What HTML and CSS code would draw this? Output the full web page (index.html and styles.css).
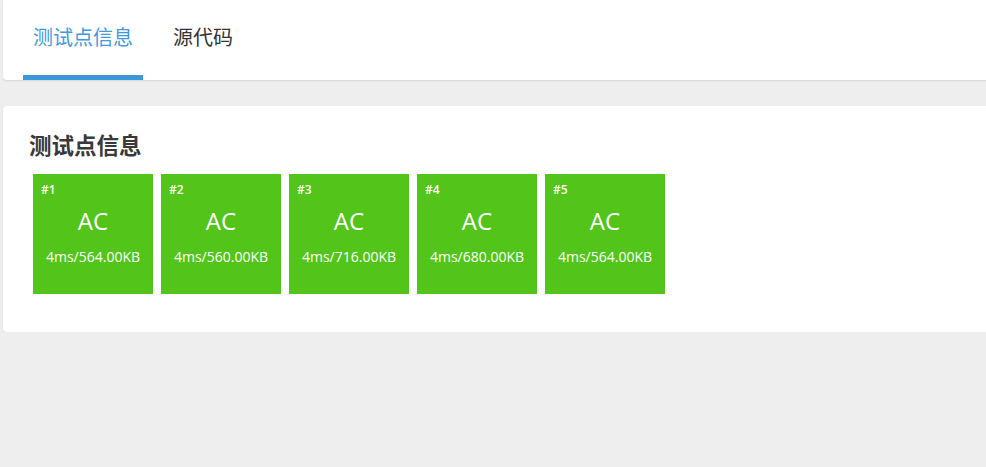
FILE: index.html
```html
<!DOCTYPE html>
<html lang="zh-CN">
<head>
    <meta charset="UTF-8">
    <meta name="viewport" content="width=device-width, initial-scale=1.0">
    <title>测试点信息</title>
    <link rel="stylesheet" href="styles.css">
</head>
<body>
    <div class="page">
        <div class="tabs-card">
            <div class="tab active">测试点信息</div>
            <div class="tab">源代码</div>
        </div>

        <div class="card">
            <h2 class="card-title">测试点信息</h2>
            <div class="cases">
                <div class="case">
                    <span class="case-id">#1</span>
                    <span class="case-status">AC</span>
                    <span class="case-info">4ms/564.00KB</span>
                </div>
                <div class="case">
                    <span class="case-id">#2</span>
                    <span class="case-status">AC</span>
                    <span class="case-info">4ms/560.00KB</span>
                </div>
                <div class="case">
                    <span class="case-id">#3</span>
                    <span class="case-status">AC</span>
                    <span class="case-info">4ms/716.00KB</span>
                </div>
                <div class="case">
                    <span class="case-id">#4</span>
                    <span class="case-status">AC</span>
                    <span class="case-info">4ms/680.00KB</span>
                </div>
                <div class="case">
                    <span class="case-id">#5</span>
                    <span class="case-status">AC</span>
                    <span class="case-info">4ms/564.00KB</span>
                </div>
            </div>
        </div>
    </div>
</body>
</html>
```

FILE: styles.css
```css
body {
    margin: 0;
    background-color: #eeeeee;
    font-family: 'Open Sans', 'Noto Sans CJK SC', sans-serif;
    overflow: hidden;
}

.page {
    padding-left: 3px;
}

.tabs-card {
    display: flex;
    gap: 20px;
    height: 80px;
    padding-left: 20px;
    margin-right: -10px;
    background-color: #fff;
    border-radius: 0 0 4px 4px;
    box-shadow: 0 1px 2px rgba(0, 0, 0, 0.1);
}

.tab {
    box-sizing: border-box;
    height: 80px;
    padding: 0 10px;
    line-height: 75px;
    font-size: 20px;
    color: #333;
    border-bottom: 5px solid transparent;
    cursor: pointer;
}

.tab.active {
    color: #3f9ae0;
    border-bottom-color: #3a98da;
}

.card {
    margin-top: 26px;
    margin-right: -10px;
    padding: 26px 26px 38px;
    background-color: #fff;
    border-radius: 4px;
    box-shadow: 0 1px 2px rgba(0, 0, 0, 0.1);
}

.card-title {
    margin: 0 0 14px 0;
    font-size: 22.5px;
    line-height: 28px;
    font-weight: bold;
    color: #393939;
}

.cases {
    display: flex;
    gap: 8px;
    padding-left: 4px;
}

.case {
    display: flex;
    flex-direction: column;
    width: 120px;
    height: 120px;
    box-sizing: border-box;
    padding-top: 8px;
    background-color: #52c41a;
    color: #fff;
    text-align: center;
}

.case-id {
    align-self: flex-start;
    margin-left: 8px;
    font-size: 12px;
    line-height: 16px;
    font-weight: 600;
}

.case-status {
    margin-top: 8px;
    font-size: 24px;
    line-height: 30px;
}

.case-info {
    margin-top: 12px;
    font-size: 14px;
    line-height: 18px;
}
```
